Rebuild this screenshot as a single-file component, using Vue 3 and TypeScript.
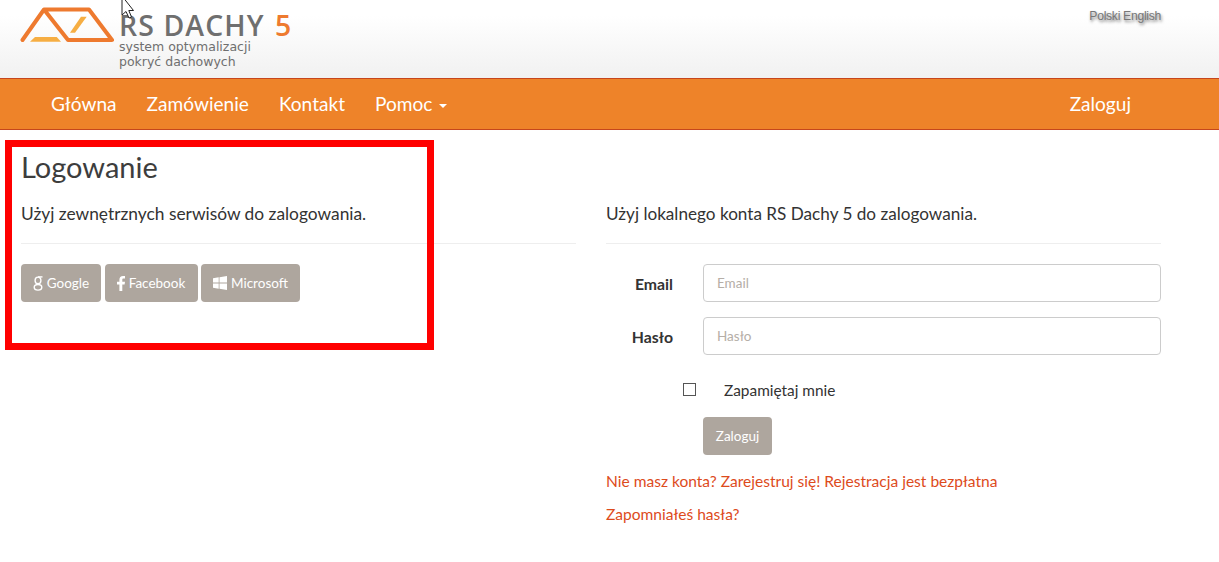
<script setup lang="ts">
const navLeft: string[] = ['Główna', 'Zamówienie', 'Kontakt'];
</script>

<template>
  <div class="page">
    <header class="top">
      <div class="brand">
        <svg class="mark" width="94" height="38" viewBox="0 0 94 38">
          <path d="M2.5 34 L24 3.5 L69 3.5 L92 34 L48 34 L24 3.5" fill="none" stroke="#ee7a2f" stroke-width="4" stroke-linejoin="round" stroke-linecap="round" />
          <path d="M10 35.8 L15 31 L36.7 31 L41 35.8 Z" fill="#f6ae43" />
          <path d="M50 26.7 L61 10.7 L66.7 10.7 L55 26.7 Z" fill="#f6ae43" />
        </svg>
        <div class="brand-text">
          <div class="brand-name">RS DACHY <span class="five">5</span></div>
          <div class="brand-sub">system optymalizacji<br />pokryć dachowych</div>
        </div>
      </div>
      <div class="langs">Polski English</div>
    </header>

    <nav class="nav">
      <div class="nav-group">
        <a v-for="item in navLeft" :key="item" class="nav-link">{{ item }}</a>
        <a class="nav-link">Pomoc <span class="caret"></span></a>
      </div>
      <a class="nav-link">Zaloguj</a>
    </nav>

    <main class="content">
      <section class="col col-left">
        <h2 class="title">Logowanie</h2>
        <h4 class="sub sub-left">Użyj zewnętrznych serwisów do zalogowania.</h4>
        <hr class="rule" />
        <div class="socials">
          <button class="btn btn-g">
            <svg width="10" height="15" viewBox="0 0 10 15"><g fill="none" stroke="#fff" stroke-width="1.4"><ellipse cx="5" cy="4.4" rx="2.9" ry="3.3" /><ellipse cx="5" cy="11.3" rx="3.8" ry="2.8" /><path d="M5 0.9h4.5" /></g></svg>
            Google
          </button>
          <button class="btn btn-f">
            <svg width="8" height="15" viewBox="0 0 8 15"><path d="M2.4 15V8.4H0V5.8h2.4V3.7C2.4 1.4 3.7 0 6 0h2v2.6H6.6c-1 0-1.3.5-1.3 1.3v1.9H8l-.4 2.6H5.3V15z" fill="#fff" /></svg>
            Facebook
          </button>
          <button class="btn btn-m">
            <svg width="14" height="14" viewBox="0 0 14 14"><path d="M0 2.2 5.7 1.3V6.6H0zM6.5 1.2 14 0V6.6H6.5zM0 7.4H5.7V12.7L0 11.8zM6.5 7.4H14V14L6.5 12.8z" fill="#fff" /></svg>
            Microsoft
          </button>
        </div>
      </section>

      <section class="col col-right">
        <h4 class="sub sub-right">Użyj lokalnego konta RS Dachy 5 do zalogowania.</h4>
        <hr class="rule" />
        <form class="form" @submit.prevent>
          <div class="row">
            <label class="label">Email</label>
            <input class="input" type="text" placeholder="Email" />
          </div>
          <div class="row">
            <label class="label">Hasło</label>
            <input class="input" type="password" placeholder="Hasło" />
          </div>
          <div class="remember">
            <span class="check"></span>
            <span>Zapamiętaj mnie</span>
          </div>
          <button class="btn btn-login" type="button">Zaloguj</button>
        </form>
        <p class="link link-first">Nie masz konta? Zarejestruj się! Rejestracja jest bezpłatna</p>
        <p class="link">Zapomniałeś hasła?</p>
      </section>
    </main>

    <div class="annotation"></div>
    <svg class="cursor" width="14" height="20" viewBox="0 0 14 20">
      <path d="M1 -4 L1 15 L5 11.5 L8 18 L10.5 17 L7.8 10.5 L12.5 10.5 Z" fill="#fff" stroke="#222" stroke-width="1" />
    </svg>
  </div>
</template>

<style>
html, body { margin: 0; background: #fff; }
</style>

<style scoped>
.page {
  position: relative;
  width: 1219px;
  height: 562px;
  overflow: hidden;
  font-family: "Lato", "Noto Sans", sans-serif;
  color: #333;
  background: #fff;
}
.top {
  height: 78px;
  box-sizing: border-box;
  display: flex;
  justify-content: space-between;
  background: linear-gradient(#ffffff 20%, #f1f1f1 100%);
}
.brand {
  display: flex;
  padding-left: 20px;
  gap: 5px;
}
.mark { margin-top: 6px; }
.brand-text { padding-top: 11px; }
.brand-name {
  font-family: "Open Sans", sans-serif;
  font-size: 28.4px;
  font-weight: 600;
  line-height: 29px;
  letter-spacing: 1.1px;
  color: #6f6f6f;
}
.five { color: #ee7a2f; font-weight: 600; margin-left: 2px; }
.brand-sub {
  font-family: "DejaVu Sans", sans-serif;
  font-size: 12.5px;
  line-height: 14.5px;
  color: #6f6f6f;
}
.langs {
  font-family: "Liberation Sans", sans-serif;
  font-size: 12.2px;
  letter-spacing: -0.3px;
  color: #777;
  text-shadow: 1px 2px 3px rgba(0, 0, 0, 0.55);
  padding: 9px 58px 0 0;
}
.nav {
  height: 52px;
  box-sizing: border-box;
  background: #ee8329;
  border-top: 1px solid #c6461c;
  border-bottom: 1px solid #c6461c;
  display: flex;
  justify-content: space-between;
  align-items: center;
  padding: 0 88px 0 51px;
}
.nav-group { display: flex; gap: 30px; }
.nav-link {
  color: #fff;
  font-size: 19.1px;
  line-height: 50px;
}
.caret {
  display: inline-block;
  width: 0;
  height: 0;
  margin-left: 2px;
  vertical-align: middle;
  border-top: 4px solid #fff;
  border-left: 4px solid transparent;
  border-right: 4px solid transparent;
}
.content {
  display: flex;
  padding-left: 21px;
  gap: 30px;
}
.col-left { width: 555px; }
.col-right { width: 555px; padding-top: 73px; }
.title {
  margin: 19px 0 0;
  font-size: 29px;
  line-height: 36px;
  font-weight: 400;
  color: #3d3d3d;
}
.sub {
  margin: 0;
  line-height: 22px;
  font-weight: 400;
}
.sub-left { margin-top: 18px; font-size: 17.35px; }
.sub-right { font-size: 17.15px; }
.rule {
  margin: 18px 0 20px;
  border: 0;
  border-top: 1px solid #eee;
}
.socials { display: flex; gap: 3.5px; }
.btn {
  height: 38px;
  box-sizing: border-box;
  border: 0;
  border-radius: 4px;
  background: #aea69e;
  color: #fff;
  font-family: inherit;
  font-size: 13.5px;
  display: flex;
  align-items: center;
  justify-content: center;
  gap: 4px;
  padding: 0;
}
.btn-g { width: 80px; }
.btn-f { width: 93px; }
.btn-m { width: 99px; }
.form { display: flex; flex-direction: column; }
.row {
  display: flex;
  align-items: center;
  height: 38px;
  margin-bottom: 15px;
}
.label {
  width: 67px;
  text-align: right;
  font-size: 15.8px;
  font-weight: 700;
  margin-right: 30px;
}
.input {
  flex: 1;
  height: 38px;
  box-sizing: border-box;
  border: 1px solid #ccc;
  border-radius: 4px;
  padding: 0 13px;
  font-family: inherit;
  font-size: 13.5px;
  outline: none;
  min-width: 0;
}
.input::placeholder { color: #b5aea7; opacity: 1; }
.remember {
  display: flex;
  align-items: center;
  height: 24px;
  margin-top: 8px;
  padding-left: 77px;
  font-size: 15.4px;
}
.check {
  width: 11px;
  height: 11px;
  border: 1px solid #555;
  margin-right: 28px;
  margin-top: -2px;
}
.btn-login {
  width: 69px;
  margin: 15px 0 0 97px;
}
.link {
  margin: 0;
  color: #dd4b1c;
  font-size: 15.55px;
  line-height: 22px;
}
.link-first { margin-top: 15px; margin-bottom: 11px; }
.annotation {
  position: absolute;
  left: 5px;
  top: 140px;
  width: 429px;
  height: 210px;
  box-sizing: border-box;
  border: 7px solid #ff0000;
  pointer-events: none;
}
.cursor {
  position: absolute;
  left: 121px;
  top: 0;
}
</style>
